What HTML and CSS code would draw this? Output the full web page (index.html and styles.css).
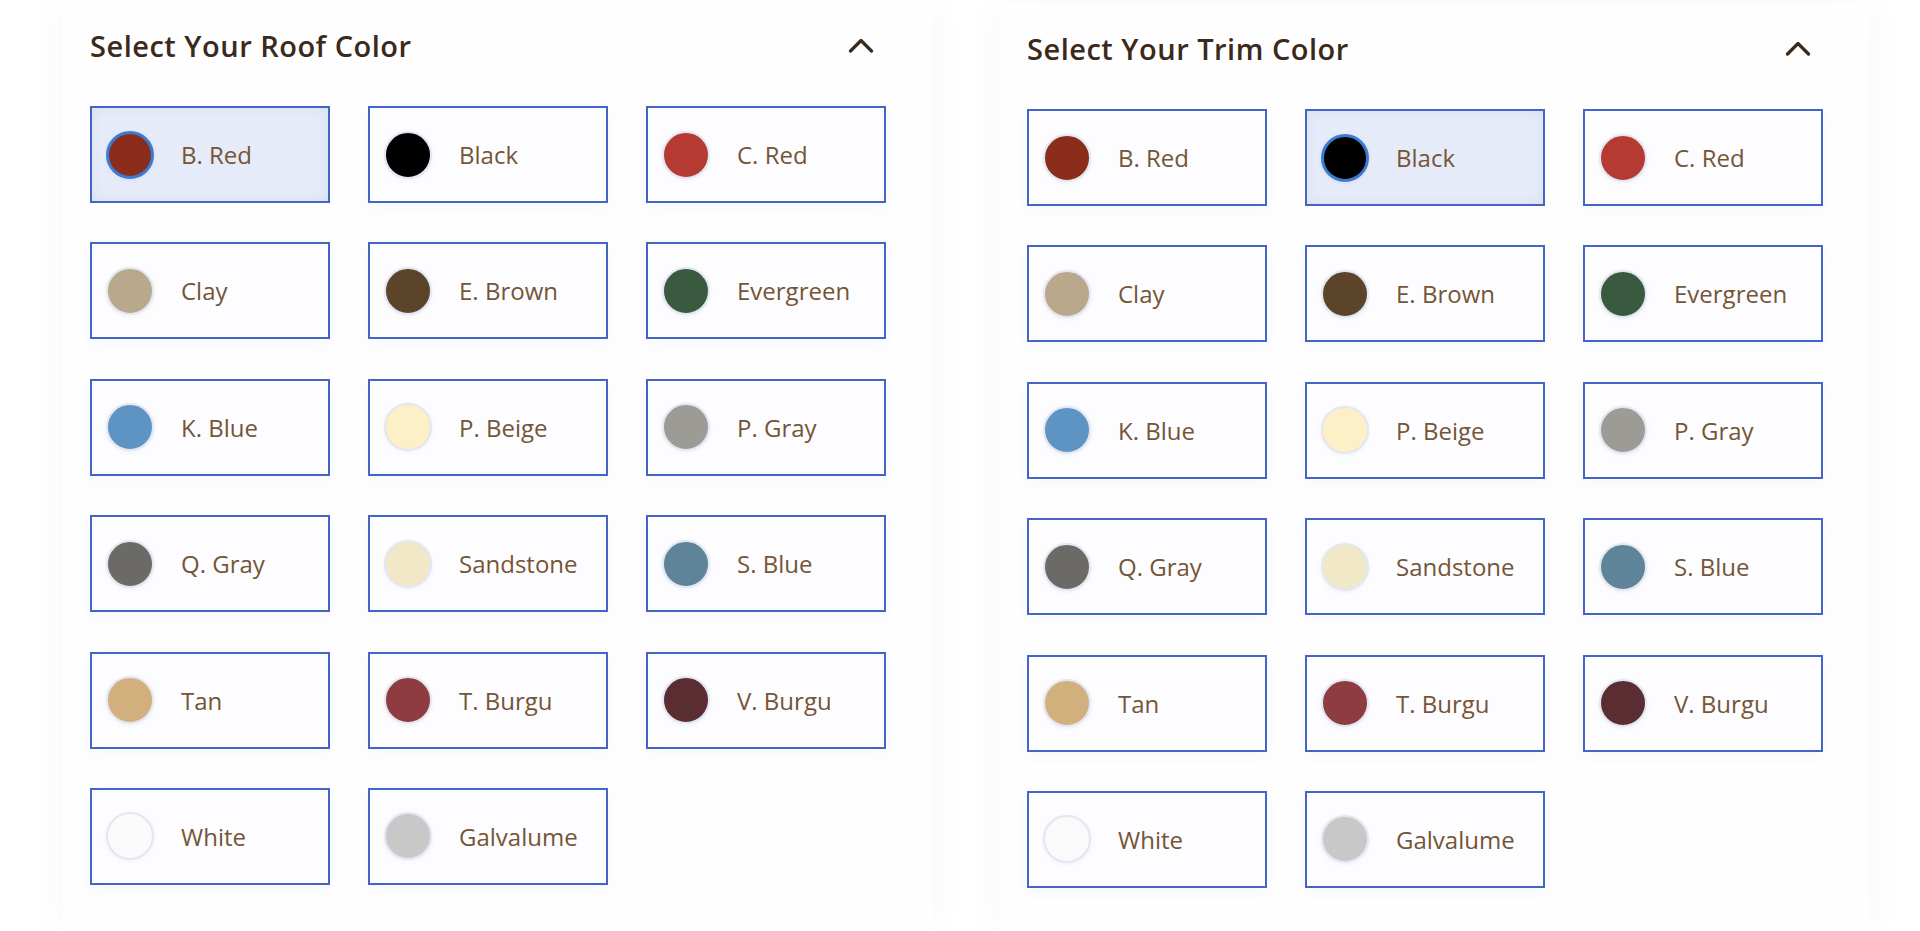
FILE: index.html
```html
<!DOCTYPE html>
<html lang="en">
<head>
<meta charset="utf-8">
<title>Select Colors</title>
<link rel="stylesheet" href="styles.css">
</head>
<body>
<main class="page">
  <section class="panel">
    <header class="panel-head">
      <h2 class="panel-title">Select Your Roof Color</h2>
      <svg class="chev" width="26" height="15" viewBox="0 0 26 15"><polyline points="2.5,13 13,2.5 23.5,13" fill="none" stroke="#3b2a1c" stroke-width="3.2" stroke-linecap="round" stroke-linejoin="round"/></svg>
    </header>
    <div class="grid">
      <div class="card selected"><span class="dot c-bred"></span><span class="label">B. Red</span></div>
      <div class="card"><span class="dot c-black"></span><span class="label">Black</span></div>
      <div class="card"><span class="dot c-cred"></span><span class="label">C. Red</span></div>
      <div class="card"><span class="dot c-clay"></span><span class="label">Clay</span></div>
      <div class="card"><span class="dot c-ebrown"></span><span class="label">E. Brown</span></div>
      <div class="card"><span class="dot c-evergreen"></span><span class="label">Evergreen</span></div>
      <div class="card"><span class="dot c-kblue"></span><span class="label">K. Blue</span></div>
      <div class="card"><span class="dot c-pbeige"></span><span class="label">P. Beige</span></div>
      <div class="card"><span class="dot c-pgray"></span><span class="label">P. Gray</span></div>
      <div class="card"><span class="dot c-qgray"></span><span class="label">Q. Gray</span></div>
      <div class="card"><span class="dot c-sandstone"></span><span class="label">Sandstone</span></div>
      <div class="card"><span class="dot c-sblue"></span><span class="label">S. Blue</span></div>
      <div class="card"><span class="dot c-tan"></span><span class="label">Tan</span></div>
      <div class="card"><span class="dot c-tburgu"></span><span class="label">T. Burgu</span></div>
      <div class="card"><span class="dot c-vburgu"></span><span class="label">V. Burgu</span></div>
      <div class="card"><span class="dot c-white"></span><span class="label">White</span></div>
      <div class="card"><span class="dot c-galv"></span><span class="label">Galvalume</span></div>
    </div>
  </section>
  <section class="panel panel-trim">
    <header class="panel-head">
      <h2 class="panel-title">Select Your Trim Color</h2>
      <svg class="chev" width="26" height="15" viewBox="0 0 26 15"><polyline points="2.5,13 13,2.5 23.5,13" fill="none" stroke="#3b2a1c" stroke-width="3.2" stroke-linecap="round" stroke-linejoin="round"/></svg>
    </header>
    <div class="grid">
      <div class="card"><span class="dot c-bred"></span><span class="label">B. Red</span></div>
      <div class="card selected"><span class="dot c-black"></span><span class="label">Black</span></div>
      <div class="card"><span class="dot c-cred"></span><span class="label">C. Red</span></div>
      <div class="card"><span class="dot c-clay"></span><span class="label">Clay</span></div>
      <div class="card"><span class="dot c-ebrown"></span><span class="label">E. Brown</span></div>
      <div class="card"><span class="dot c-evergreen"></span><span class="label">Evergreen</span></div>
      <div class="card"><span class="dot c-kblue"></span><span class="label">K. Blue</span></div>
      <div class="card"><span class="dot c-pbeige"></span><span class="label">P. Beige</span></div>
      <div class="card"><span class="dot c-pgray"></span><span class="label">P. Gray</span></div>
      <div class="card"><span class="dot c-qgray"></span><span class="label">Q. Gray</span></div>
      <div class="card"><span class="dot c-sandstone"></span><span class="label">Sandstone</span></div>
      <div class="card"><span class="dot c-sblue"></span><span class="label">S. Blue</span></div>
      <div class="card"><span class="dot c-tan"></span><span class="label">Tan</span></div>
      <div class="card"><span class="dot c-tburgu"></span><span class="label">T. Burgu</span></div>
      <div class="card"><span class="dot c-vburgu"></span><span class="label">V. Burgu</span></div>
      <div class="card"><span class="dot c-white"></span><span class="label">White</span></div>
      <div class="card"><span class="dot c-galv"></span><span class="label">Galvalume</span></div>
    </div>
  </section>
</main>
</body>
</html>
```

FILE: styles.css
```css
* { box-sizing: border-box; }
html, body { margin: 0; padding: 0; }
body {
  background: #ffffff;
  font-family: "Open Sans", "Noto Sans", sans-serif;
  width: 1920px;
  height: 931px;
  overflow: hidden;
}
.page {
  display: flex;
  align-items: flex-start;
  gap: 67px;
  padding-left: 62px;
}
.panel {
  width: 870px;
  padding: 28px 46px 46px 28px;
  background: #fefeff;
  box-shadow: 0 0 40px rgba(40, 60, 130, 0.035);
  border-radius: 8px;
}
.panel-trim { margin-top: 3px; }
.panel-head {
  display: flex;
  align-items: center;
  justify-content: space-between;
  height: 36px;
  padding-right: 12px;
}
.panel-title {
  margin: 0;
  font-size: 29px;
  line-height: 36px;
  font-weight: 600;
  color: #3b2a1c;
  letter-spacing: 0.5px;
}
.chev { display: block; margin-top: -2px; }
.grid {
  margin-top: 42px;
  display: grid;
  grid-template-columns: repeat(3, 240px);
  grid-auto-rows: 97px;
  column-gap: 38px;
  row-gap: 39.4px;
}
.card {
  display: flex;
  align-items: center;
  padding-left: 15px;
  border: 2px solid #4565c6;
  background: #fdfdff;
  box-shadow: 0 4px 14px rgba(60, 80, 150, 0.04);
}
.card.selected {
  background: #e5ebf8;
  box-shadow: inset 0 0 12px rgba(70, 90, 160, 0.08);
}
.dot {
  flex: none;
  width: 48px;
  height: 48px;
  border-radius: 50%;
  border: 2.5px solid #e2e7f1;
  box-shadow: 0 1px 4px rgba(60, 80, 140, 0.08);
  margin-right: 27px;
  margin-left: -1px;
}
.card.selected .dot {
  border: 3px solid #3b7bd3;
}
.label {
  font-size: 24px;
  color: #755536;
  white-space: nowrap;
}
.c-bred { background: #8a2e1b; }
.c-black { background: #000000; }
.c-cred { background: #b53a32; }
.c-clay { background: #b9a88b; }
.c-ebrown { background: #5b4429; }
.c-evergreen { background: #3a5a40; }
.c-kblue { background: #5e94c4; }
.c-pbeige { background: #fdf0c6; }
.c-pgray { background: #9d9b96; }
.c-qgray { background: #6b6a66; }
.c-sandstone { background: #f1e8c7; }
.c-sblue { background: #5f8499; }
.c-tan { background: #d2b07d; }
.c-tburgu { background: #8e3c40; }
.c-vburgu { background: #5a2d33; }
.c-white { background: #fafafb; }
.c-galv { background: #c8c8c8; }
```
